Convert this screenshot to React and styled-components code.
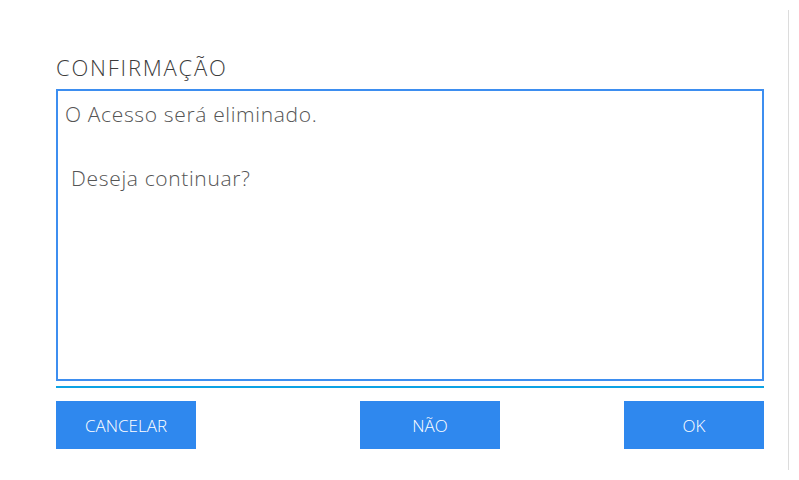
import React from 'react'
import styled, { createGlobalStyle } from 'styled-components'

const Global = createGlobalStyle`
  html, body {
    margin: 0;
    padding: 0;
    background: #ffffff;
  }
  body {
    font-family: "Open Sans", "Liberation Sans", sans-serif;
  }
`;

const Page = styled.div`
  display: flex;
  width: 799px;
  height: 480px;
  box-sizing: border-box;
`;

const Dialog = styled.div`
  display: flex;
  flex-direction: column;
  width: 708px;
  margin-left: 56px;
  padding-top: 52px;
`;

const SideRule = styled.div`
  width: 1px;
  height: 460px;
  margin-top: 10px;
  margin-left: 24px;
  background: #dcdcdc;
`;

const Title = styled.h2`
  margin: 0 0 6px 0;
  font-size: 22px;
  font-weight: 300;
  letter-spacing: 1.8px;
  line-height: 31px;
  color: #3c3c3c;
`;

const MessageBox = styled.div`
  box-sizing: border-box;
  height: 292px;
  border: 2px solid #3d8ef0;
  padding: 10px 7px;
  font-size: 21px;
  font-weight: 300;
  letter-spacing: 0.65px;
  line-height: 27px;
  color: #555555;
  p {
    margin: 0;
    white-space: pre;
  }
  p + p {
    margin-top: 37px;
  }
`;

const Divider = styled.div`
  height: 2px;
  margin-top: 5px;
  background: #0ca3e4;
`;

const Actions = styled.div`
  display: flex;
  margin-top: 13px;
`;

const Button = styled.button`
  width: 140px;
  height: 48px;
  margin-left: ${p => p.$offset || '0'};
  border: none;
  border-radius: 0;
  background: #2f88ee;
  color: #ffffff;
  font-family: "Open Sans", "Liberation Sans", sans-serif;
  font-size: 17px;
  font-weight: 300;
  cursor: pointer;
  padding: 0;
`;

export default function App() {
  return (
    <>
      <Global />
      <Page>
        <Dialog>
          <Title>CONFIRMAÇÃO</Title>
          <MessageBox>
            <p>O Acesso será eliminado.</p>
            <p> Deseja continuar?</p>
          </MessageBox>
          <Divider />
          <Actions>
            <Button>CANCELAR</Button>
            <Button $offset="164px">NÃO</Button>
            <Button $offset="auto">OK</Button>
          </Actions>
        </Dialog>
        <SideRule />
      </Page>
    </>
  )
}
